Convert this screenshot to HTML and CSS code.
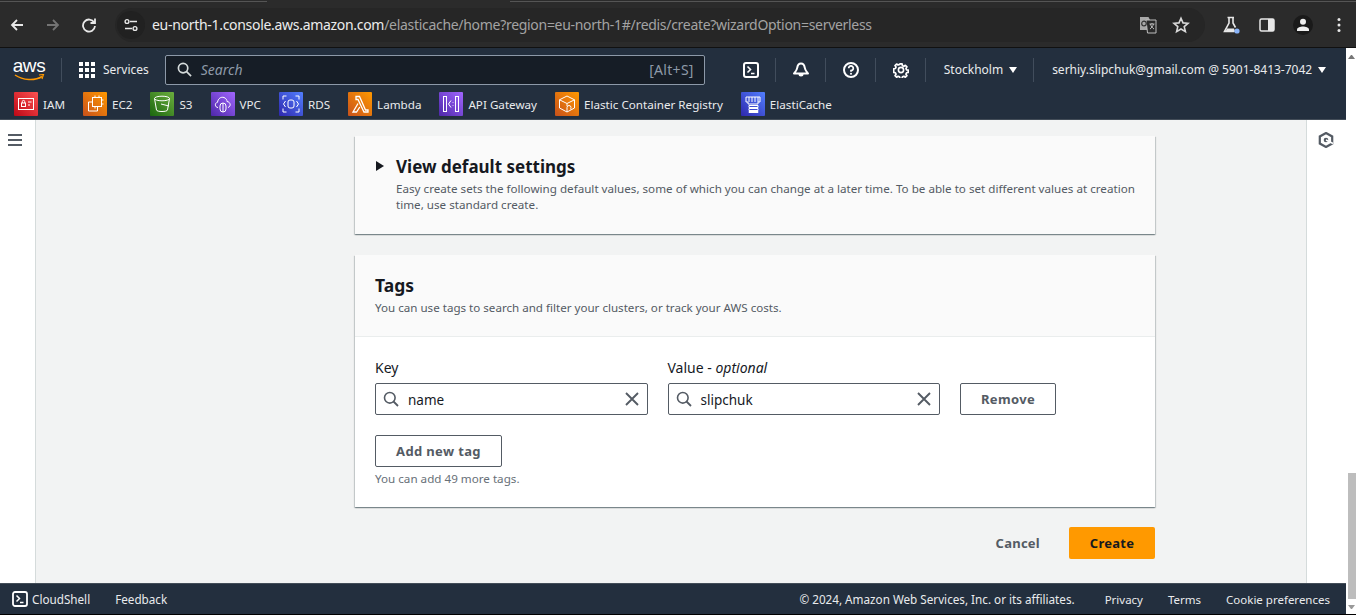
FILE: index.html
```html
<!doctype html>
<html lang="en">
<head>
<meta charset="utf-8">
<title>ElastiCache - Create serverless cache</title>
<link rel="stylesheet" href="styles.css">
</head>
<body>

<!-- browser chrome -->
<div class="chrome">
	<div class="chromeNav">
		<svg class="chromeIcon" viewBox="0 0 16 16"><path d="M14 8H3M8 3 3 8l5 5" fill="none" stroke="#e8e8e8" stroke-width="1.8"/></svg>
		<svg class="chromeIcon" viewBox="0 0 16 16"><path d="M2 8h11M8 3l5 5-5 5" fill="none" stroke="#747474" stroke-width="1.8"/></svg>
		<svg class="chromeIcon" viewBox="0 0 16 16"><path d="M13.2 5.5A6 6 0 1 0 14 9M14 1.5V6H9.5" fill="none" stroke="#e8e8e8" stroke-width="1.8"/></svg>
	</div>
	<div class="omnibox">
		<span class="siteInfo">
			<svg viewBox="0 0 16 16" width="16" height="16"><path d="M7 4.500h7M2 11.500h7" stroke="#e8e8e8" stroke-width="1.6" fill="none"/><circle cx="4" cy="4.500" r="1.900" stroke="#e8e8e8" stroke-width="1.4" fill="none"/><circle cx="12" cy="11.500" r="1.900" stroke="#e8e8e8" stroke-width="1.4" fill="none"/></svg>
		</span>
		<span class="url"><span class="urlHost">eu-north-1.console.aws.amazon.com</span>/elasticache/home?region=eu-north-1#/redis/create?wizardOption=serverless</span>
		<svg class="translate" viewBox="0 0 18 18" width="18" height="18"><path d="M1 1h8.500l1.500 3v10H1z" fill="#a8a8a8"/><path d="M7 4h10v13H8.500z" fill="#2a2a2a" stroke="#bdbdbd"/><circle cx="5" cy="7.500" r="2.300" fill="none" stroke="#333" stroke-width="1.2"/><path d="M10.500 8h5M13 7v1M11.500 8c.5 2.500 2 4 3.500 5M14.500 8c-.5 2-2 4-3.500 5" stroke="#bdbdbd" fill="none"/></svg>
		<svg class="star" viewBox="0 0 18 18" width="18" height="18"><path d="M9 2.200l2 4.700 5 .4-3.800 3.300 1.200 5L9 13l-4.400 2.600 1.200-5L2 7.300l5-.4z" fill="none" stroke="#d8d8d8" stroke-width="1.600"/></svg>
	</div>
	<div class="chromeTools">
		<span class="toolSlot">
			<svg viewBox="0 0 18 18" width="18" height="18"><path d="M5.500 1.500h6.500M7 2v5L2.500 15.500h10M11 2v5l2.500 4.500" fill="none" stroke="#e8e8e8" stroke-width="1.600"/><path d="M5 12.500h7l1 3H3.500z" fill="#e8e8e8"/><circle cx="15" cy="15" r="2.600" fill="#8ab4f8"/></svg>
		</span>
		<span class="toolSlot">
			<svg viewBox="0 0 16 16" width="16" height="16"><rect x="1" y="2" width="14" height="12" rx="1.500" fill="none" stroke="#e8e8e8" stroke-width="1.500"/><rect x="9" y="2" width="6" height="12" fill="#e8e8e8"/></svg>
		</span>
		<span class="toolSlot avatar">
			<svg viewBox="0 0 16 16" width="16" height="16"><circle cx="8" cy="4.800" r="3" fill="#f0f0f0"/><path d="M2 14v-1.500c0-2 3.500-3 6-3s6 1 6 3V14z" fill="#f0f0f0"/></svg>
		</span>
		<span class="toolSlot">
			<svg viewBox="0 0 4 16" width="4" height="16"><circle cx="2" cy="2.500" r="1.500" fill="#e8e8e8"/><circle cx="2" cy="8" r="1.500" fill="#e8e8e8"/><circle cx="2" cy="13.500" r="1.500" fill="#e8e8e8"/></svg>
		</span>
	</div>
</div>

<div class="viewport">
	<div class="app">

		<header class="topNav">
			<div class="navRow">
				<div class="awsLogo">
					<span class="awsWord">aws</span>
					<svg viewBox="0 0 31 8" width="31" height="8"><path d="M1 1c8 5.500 20 6 27 1.500" fill="none" stroke="#f90" stroke-width="1.500"/><path d="M25 1l4.500-.5L28 5" fill="none" stroke="#f90" stroke-width="1.200"/></svg>
				</div>
				<span class="navSep"></span>
				<svg class="gridIcon" viewBox="0 0 16 16" width="16" height="16"><path d="M0 0h4v4H0zM6 0h4v4H6zM12 0h4v4h-4zM0 6h4v4H0zM6 6h4v4H6zM12 6h4v4h-4zM0 12h4v4H0zM6 12h4v4H6zM12 12h4v4h-4z" fill="#fff"/></svg>
				<span class="navText servicesLabel">Services</span>
				<div class="globalSearch">
					<svg viewBox="0 0 16 16" width="15" height="15"><circle cx="6.500" cy="6.500" r="5" fill="none" stroke="#d5dbdb" stroke-width="1.800"/><path d="M10 10l5 5" stroke="#d5dbdb" stroke-width="1.800"/></svg>
					<span class="searchHint">Search</span>
					<span class="searchKey">[Alt+S]</span>
				</div>
				<svg class="navIcon termIcon" viewBox="0 0 16 16" width="16" height="16"><rect x="1" y="1" width="14" height="14" rx="2" fill="none" stroke="#fff" stroke-width="2"/><path d="M4.500 4.500 7.500 7.500 4.500 10.500M8 11.500h3.500" fill="none" stroke="#fff" stroke-width="1.600"/></svg>
				<span class="navSep"></span>
				<svg class="navIcon" viewBox="0 0 16 16" width="16" height="16"><path d="M8 1.500c-2.600 0-3.400 2-3.700 4C4 8 2.500 9.500 1 11.500h14c-1.500-2-3-3.500-3.300-6-.3-2-1.100-4-3.700-4z" fill="none" stroke="#fff" stroke-width="2" stroke-linejoin="round"/><path d="M5.500 12a2.500 2.500 0 0 0 5 0z" fill="#fff"/></svg>
				<span class="navSep"></span>
				<svg class="navIcon" viewBox="0 0 16 16" width="16" height="16"><circle cx="8" cy="8" r="7" fill="none" stroke="#fff" stroke-width="2"/><path d="M5.700 6.300A2.300 2.300 0 1 1 8 8.500v1.300" fill="none" stroke="#fff" stroke-width="1.700"/><circle cx="8" cy="11.800" r="1" fill="#fff"/></svg>
				<span class="navSep"></span>
				<svg class="navIcon" viewBox="0 0 16 16" width="16" height="16"><circle cx="8" cy="8" r="2.600" fill="none" stroke="#fff" stroke-width="1.600"/><path d="M6.700 1h2.600l.4 2 1.700.7 1.700-1.100 1.800 1.800-1.100 1.700.7 1.700 2 .4v2.600l-2 .4-.7 1.700 1.100 1.700-1.800 1.800-1.700-1.100-1.700.7-.4 2H6.700l-.4-2-1.700-.7-1.700 1.100-1.800-1.800 1.100-1.700-.7-1.700-2-.4V6.700l2-.4.7-1.700-1.100-1.700 1.800-1.800 1.700 1.100 1.700-.7z" transform="translate(1.100 1.100) scale(.86)" fill="none" stroke="#fff" stroke-width="2" stroke-linejoin="round"/></svg>
				<span class="navSep"></span>
				<span class="navText">Stockholm</span><span class="caret"></span>
				<span class="navSep"></span>
				<span class="navText">serhiy.slipchuk@gmail.com @ 5901-8413-7042</span><span class="caret"></span>
			</div>

			<div class="favRow">
				<a class="fav"><span class="svcIcon svcRed"><svg viewBox="0 0 24 24"><rect x="4.500" y="6.500" width="15" height="11" fill="none" stroke="#fff"/><rect x="7.500" y="11" width="4" height="3.500" fill="none" stroke="#fff"/><path d="M8.300 11V9.600a1.200 1.200 0 0 1 2.400 0V11M14 10h3.500M14 13h2" fill="none" stroke="#fff"/></svg></span>IAM</a>
				<a class="fav"><span class="svcIcon svcOrange"><svg viewBox="0 0 24 24"><rect x="9.500" y="5.500" width="9" height="9" fill="none" stroke="#fff"/><path d="M9.500 10H5.500v9h9v-4.500M12 3.500v2M16 3.500v2M12 14.500v2M20.500 8h-2M20.500 12h-2" fill="none" stroke="#fff"/></svg></span>EC2</a>
				<a class="fav"><span class="svcIcon svcGreen"><svg viewBox="0 0 24 24"><ellipse cx="12" cy="6.500" rx="7.500" ry="2.300" fill="none" stroke="#fff"/><path d="M4.500 6.500 6.500 18c.3 2 10.700 2 11 0l2-11.500M11 12l8 2" fill="none" stroke="#fff"/></svg></span>S3</a>
				<a class="fav"><span class="svcIcon svcPurple"><svg viewBox="0 0 24 24"><path d="M7 15.500c-3 0-3.800-4.500-.5-5.200C7 6.500 10 4.500 13 5.500c2 .7 3 2.500 3 4 3.500.3 4.500 4.800 1 6" fill="none" stroke="#fff"/><rect x="9" y="11" width="6" height="9" rx="3" fill="none" stroke="#fff"/><path d="M12 11v9" stroke="#fff"/></svg></span>VPC</a>
				<a class="fav"><span class="svcIcon svcBlue"><svg viewBox="0 0 24 24"><rect x="9" y="8" width="6" height="8" rx="2" fill="none" stroke="#fff"/><path d="M4 4h3.500M4 4v3.500M20 4h-3.500M20 4v3.500M4 20h3.500M4 20v-3.500M20 20h-3.500M20 20v-3.500M6.500 9 4.500 12l2 3M17.500 9l2 3-2 3" fill="none" stroke="#fff"/></svg></span>RDS</a>
				<a class="fav"><span class="svcIcon svcOrange"><svg viewBox="0 0 24 24"><path d="M8 4.500h3.500L17.500 18H20v2h-4L10 7.500H8zM10 11.500 5 20h3.500l3.300-5" fill="none" stroke="#fff" stroke-width="1.300"/></svg></span>Lambda</a>
				<a class="fav"><span class="svcIcon svcPurple"><svg viewBox="0 0 24 24"><rect x="4.500" y="4.500" width="3" height="15" fill="none" stroke="#fff"/><rect x="16.500" y="4.500" width="3" height="15" fill="none" stroke="#fff"/><path d="M12 8.500l-2.500 3.500 2.500 3.500M14 10v.7M14 13v.7" fill="none" stroke="#fff"/></svg></span>API Gateway</a>
				<a class="fav"><span class="svcIcon svcOrange"><svg viewBox="0 0 24 24"><path d="M12 4 19.500 7.800V16L12 20 4.500 16V7.800zM4.500 7.800 12 11.500l7.500-3.700M12 11.500V14" fill="none" stroke="#fff"/><path d="M12 20v-4.500a2 2 0 0 1 4 0c0 1.500-1 2-1 2" fill="none" stroke="#fff"/></svg></span>Elastic Container Registry</a>
				<a class="fav"><span class="svcIcon svcBlue"><svg viewBox="0 0 24 24"><path d="M5 5h14v5h-2v2H7v-2H5zM8 5v5M11 5v5M14 5v5M17 5v5M8 13.500h9v2H8zM8 16.500h9v2H8zM8 19.500h9v1H8z" fill="none" stroke="#fff"/></svg></span>ElastiCache</a>
			</div>
		</header>

		<div class="workspace">
			<aside class="sideLeft">
				<span class="burger"></span>
			</aside>

			<main class="content">
				<section class="card cardDefaults">
					<div class="expander">
						<span class="expandArrow"></span>
						<div>
							<h2 class="cardTitle titleSmall">View default settings</h2>
							<p class="cardDesc">Easy create sets the following default values, some of which you can change at a later time. To be able to set different values at creation time, use standard create.</p>
						</div>
					</div>
				</section>

				<section class="card">
					<div class="cardHead">
						<h2 class="cardTitle">Tags</h2>
						<p class="cardDesc descTags">You can use tags to search and filter your clusters, or track your AWS costs.</p>
					</div>
					<div class="cardBody">
						<div class="tagRow">
							<div class="field">
								<label class="fieldLabel">Key</label>
								<div class="tagInput">
									<svg viewBox="0 0 16 16" width="16" height="16"><circle cx="6.800" cy="6.800" r="5.300" fill="none" stroke="#545b64" stroke-width="1.600"/><path d="M10.500 10.500 15 15" stroke="#545b64" stroke-width="1.800"/></svg>
									<span class="tagValue">name</span>
									<svg viewBox="0 0 16 16" width="16" height="16"><path d="M2 2l12 12M14 2 2 14" stroke="#545b64" stroke-width="1.900"/></svg>
								</div>
							</div>
							<div class="field">
								<label class="fieldLabel">Value - <em>optional</em></label>
								<div class="tagInput">
									<svg viewBox="0 0 16 16" width="16" height="16"><circle cx="6.800" cy="6.800" r="5.300" fill="none" stroke="#545b64" stroke-width="1.600"/><path d="M10.500 10.500 15 15" stroke="#545b64" stroke-width="1.800"/></svg>
									<span class="tagValue">slipchuk</span>
									<svg viewBox="0 0 16 16" width="16" height="16"><path d="M2 2l12 12M14 2 2 14" stroke="#545b64" stroke-width="1.900"/></svg>
								</div>
							</div>
							<button class="btn btnRemove">Remove</button>
						</div>
						<button class="btn btnAdd">Add new tag</button>
						<p class="hint">You can add 49 more tags.</p>
					</div>
				</section>

				<div class="actions">
					<button class="btnLink">Cancel</button>
					<button class="btnPrimary">Create</button>
				</div>
			</main>

			<aside class="sideRight">
				<svg viewBox="0 0 16 16" width="16" height="16"><path d="M8 1 14.200 4.500v7L8 15 1.800 11.500v-7z" fill="none" stroke="#545b64" stroke-width="2.200"/><circle cx="8" cy="8" r="2.300" fill="#545b64"/><path d="M8 8l7 3.500" stroke="#fff" stroke-width="1.500"/></svg>
			</aside>
		</div>

		<footer class="footer">
			<svg viewBox="0 0 16 16" width="16" height="16"><rect x="1" y="1" width="14" height="14" rx="2" fill="none" stroke="#fff" stroke-width="1.800"/><path d="M4.500 4.500 7.500 7.500 4.500 10.500M8 11.500h3.500" fill="none" stroke="#fff" stroke-width="1.500"/></svg>
			<span class="footCloud">CloudShell</span>
			<span class="footFeedback">Feedback</span>
			<span class="footCopy">© 2024, Amazon Web Services, Inc. or its affiliates.</span>
			<span class="footLink">Privacy</span>
			<span class="footLink">Terms</span>
			<span class="footLink">Cookie preferences</span>
		</footer>
	</div>

	<div class="scrollbar">
		<span class="arrowUp"></span>
		<span class="thumb"></span>
		<span class="arrowDown"></span>
	</div>
</div>

</body>
</html>
```

FILE: styles.css
```css
* { box-sizing: border-box; }

body, html { height: 100%; margin: 0; overflow: hidden; }
body { background: #000; display: flex; flex-direction: column; font: 12px "Noto Sans", sans-serif; height: 615px; padding-bottom: 1px; }

h2, p { margin: 0; }
button { cursor: pointer; font-family: inherit; }

/* browser chrome */
.chrome { align-items: center; background: #2b2b2b; border-bottom: 1px solid #111; display: flex; flex: none; height: 48px; padding-top: 2px; position: relative; }
.chrome::before { background: linear-gradient(to right, #555 267px, transparent 267px, transparent 510px, #555 510px) 0 1px / 100% 1px no-repeat; content: ""; height: 2px; left: 0; position: absolute; right: 0; top: 0; }
.chromeNav { display: flex; gap: 20px; padding-left: 9px; width: 115px; }
.chromeIcon { height: 16px; width: 16px; }
.omnibox { align-items: center; background: #262626; border-radius: 18px; display: flex; height: 34px; width: 1090px; }
.siteInfo { align-items: center; background: #212121; border-radius: 14px; display: flex; height: 28px; justify-content: center; margin-left: 2px; width: 28px; }
.url { color: #a3a3a3; flex: 1; font: 14px "Noto Sans", sans-serif; letter-spacing: -.3px; margin-left: 7px; white-space: nowrap; }
.urlHost { color: #ececec; }
.translate { margin-right: 15px; }
.star { margin-right: 15px; }
.chromeTools { align-items: center; display: flex; gap: 16px; margin-left: 16px; }
.toolSlot { align-items: center; display: flex; height: 20px; justify-content: center; width: 20px; }
.avatar { background: #1a1a1a; border-radius: 50%; }

/* console header */
.viewport { display: flex; flex: 1; min-height: 0; }
.app { display: flex; flex: 1; flex-direction: column; min-width: 0; }
.topNav { background: #232f3e; border-bottom: 1px solid #434d58; color: #fff; flex: none; height: 72px; }
.navRow { align-items: center; display: flex; height: 42px; padding-top: 1px; }
.navSep { background: #414d5c; height: 24px; margin: 0 17px 0 16px; width: 1px; }
.awsLogo { align-items: center; display: flex; flex-direction: column; height: 26px; margin-left: 13px; width: 32px; }
.awsWord { font: 19px/17px "Liberation Sans", sans-serif; letter-spacing: -.4px; }
.gridIcon { flex: none; }
.navText { color: #e9ebed; font-size: 12px; margin-left: 1px; white-space: nowrap; }
.servicesLabel { margin: 0 16px 0 8px; }
.globalSearch { align-items: center; background: #161d26; border: 1px solid #8d99a8; border-radius: 2px; display: flex; height: 30px; padding: 0 10px 0 11px; width: 540px; }
.searchHint { color: #8d99a8; flex: 1; font-size: 14px; font-style: italic; margin-left: 9px; }
.searchKey { color: #8d99a8; font-size: 14px; letter-spacing: .3px; }
.navIcon { flex: none; }
.termIcon { margin-left: 38px; }
.caret { border-left: 4px solid transparent; border-right: 4px solid transparent; border-top: 6px solid #fff; margin-left: 6px; }

.favRow { align-items: center; display: flex; gap: 18px; height: 29px; padding: 0 0 1px 14px; }
.fav { align-items: center; color: #e9ebed; display: flex; font-size: 11.65px; gap: 5px; white-space: nowrap; }
.svcIcon { border-radius: 1px; display: block; flex: none; height: 24px; width: 24px; }
.svcIcon svg { display: block; height: 24px; width: 24px; }
.svcRed { background: linear-gradient(45deg, #bd0816, #ff5252); }
.svcOrange { background: linear-gradient(45deg, #c8511b, #f90); }
.svcGreen { background: linear-gradient(45deg, #1b660f, #6cae3e); }
.svcPurple { background: linear-gradient(45deg, #4d27a8, #a166ff); }
.svcBlue { background: linear-gradient(45deg, #2e27ad, #527fff); }

/* page body */
.workspace { background: #f2f3f3; display: flex; flex: 1; min-height: 0; }
.sideLeft { background: #fff; border-right: 1px solid #d5dbdb; flex: none; padding: 14px 8px 0; width: 36px; }
.burger { border-bottom: 2px solid #545b64; border-top: 2px solid #545b64; display: block; height: 12px; position: relative; width: 14px; }
.burger::after { background: #545b64; content: ""; height: 2px; left: 0; position: absolute; right: 0; top: 3px; }
.sideRight { background: #fff; border-left: 1px solid #d5dbdb; flex: none; padding: 12px 0 0 11px; width: 40px; }
.content { flex: 1; min-width: 0; padding: 16px 151px 0 319px; }

.card { background: #fff; box-shadow: 0 1px 1px 0 rgba(0, 28, 36, .3), 1px 1px 1px 0 rgba(0, 28, 36, .15), -1px 1px 1px 0 rgba(0, 28, 36, .15); margin-bottom: 21px; }
.cardDefaults { background: #fafafa; height: 98px; }
.expander { display: flex; padding: 20px 20px 0 21px; }
.expandArrow { border-bottom: 5px solid transparent; border-left: 8px solid #16191f; border-top: 5px solid transparent; flex: none; height: 10px; margin: 5px 12px 0 0; }
.cardTitle { color: #16191f; font-size: 17.5px; font-weight: 700; line-height: 22px; }
.titleSmall { font-size: 17px; }
.cardDesc { color: #545b64; font-size: 11.65px; line-height: 16px; margin-top: 3px; }
.descTags { font-size: 11.6px; margin-top: 4px; }
.cardHead { background: #fafafa; border-bottom: 1px solid #eaeded; height: 82px; padding: 19px 20px 0; }

.cardBody { height: 170px; padding: 21px 20px 0; }
.tagRow { align-items: flex-end; display: flex; gap: 20px; margin-bottom: 20px; }
.field { width: 272.5px; }
.fieldLabel { color: #16191f; display: block; font-size: 14px; line-height: 20px; margin-bottom: 5px; }
.tagInput { align-items: center; border: 1px solid #545b64; border-radius: 2px; display: flex; height: 32px; padding: 0 7px; }
.tagValue { color: #16191f; flex: 1; font-size: 13.5px; margin-left: 9px; padding-top: 2px; }
.btn { background: #fff; border: 1px solid #545b64; border-radius: 2px; color: #545b64; font-size: 13px; font-weight: 700; height: 32px; letter-spacing: .35px; padding: 0; }
.btnRemove { width: 96px; }
.btnAdd { width: 127px; }
.hint { color: #687078; font-size: 11.65px; line-height: 16px; margin-top: 4px; }

.actions { align-items: center; display: flex; justify-content: flex-end; margin-top: -1px; }
.btnLink { background: none; border: 0; color: #545b64; font-size: 13px; font-weight: 700; letter-spacing: .25px; margin-right: 29px; padding: 0; }
.btnPrimary { background: #f90; border: 0; border-radius: 2px; color: #16191f; font-size: 13px; font-weight: 700; height: 32px; letter-spacing: .25px; width: 86px; }

/* footer */
.footer { align-items: center; background: #232f3e; border-top: 1px solid #434d58; color: #e9ebed; display: flex; flex: none; font-size: 11.7px; height: 31px; padding: 0 16px 0 12px; white-space: nowrap; }
.footCloud { margin-left: 4px; }
.footFeedback { margin-left: 25px; }
.footCopy { margin-left: auto; }
.footLink { font-size: 11.5px; margin-left: 25px; }
.footCopy + .footLink { margin-left: 30px; }

/* page scrollbar */
.scrollbar { background: #fff; display: flex; flex: none; flex-direction: column; padding: 0 0 0 2px; width: 10px; }
.arrowUp { border-bottom: 4px solid #777; border-left: 3px solid transparent; border-right: 3px solid transparent; height: 0; margin-top: 7px; width: 7px; }
.thumb { background: #bdbdbd; height: 126px; margin-top: auto; }
.arrowDown { border-left: 3px solid transparent; border-right: 3px solid transparent; border-top: 4px solid #999; height: 0; margin: 6px 0 5px; width: 7px; }
```
